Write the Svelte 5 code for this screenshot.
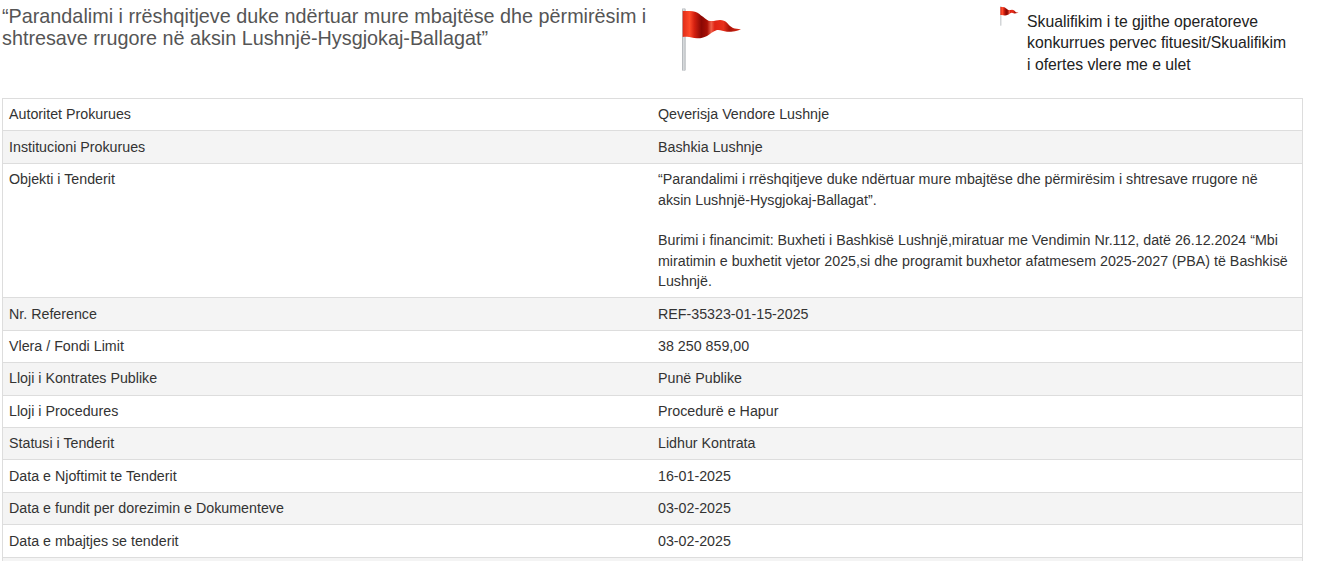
<script>
  const rows = [
    ['Autoritet Prokurues', 'Qeverisja Vendore Lushnje'],
    ['Institucioni Prokurues', 'Bashkia Lushnje'],
    ['Objekti i Tenderit', null],
    ['Nr. Reference', 'REF-35323-01-15-2025'],
    ['Vlera / Fondi Limit', '38 250 859,00'],
    ['Lloji i Kontrates Publike', 'Punë Publike'],
    ['Lloji i Procedures', 'Procedurë e Hapur'],
    ['Statusi i Tenderit', 'Lidhur Kontrata'],
    ['Data e Njoftimit te Tenderit', '16-01-2025'],
    ['Data e fundit per dorezimin e Dokumenteve', '03-02-2025'],
    ['Data e mbajtjes se tenderit', '03-02-2025'],
    ['', '']
  ];
</script>

{#snippet flag(cls, id)}
  <svg class={cls} viewBox="0 0 60 64">
    <defs>
      <linearGradient id={id} x1="0" x2="1" y1="0" y2="0">
        <stop offset="0" stop-color="#e02c18" />
        <stop offset="0.12" stop-color="#ff4a2a" />
        <stop offset="0.2" stop-color="#d42010" />
        <stop offset="0.32" stop-color="#8a0804" />
        <stop offset="0.42" stop-color="#a81006" />
        <stop offset="0.49" stop-color="#f0604a" />
        <stop offset="0.55" stop-color="#e02414" />
        <stop offset="0.7" stop-color="#e8301c" />
        <stop offset="0.8" stop-color="#a81006" />
        <stop offset="1" stop-color="#e03018" />
      </linearGradient>
      <linearGradient id="{id}-pole" x1="0" x2="1" y1="0" y2="0">
        <stop offset="0" stop-color="#a8acb0" />
        <stop offset="0.5" stop-color="#dfe2e4" />
        <stop offset="1" stop-color="#a8acb0" />
      </linearGradient>
    </defs>
    <rect x="0" y="0" width="3.6" height="63" rx="1.6" fill="url(#{id}-pole)" />
    <path d="M0.7 3 C6 3 10 3 13 3.7 C17 5 18 7 21 8.7 C24 11 26 13 28 13 C32 13.5 35 12 38 12 C41 12 43 13 45 14.7 C47 17 49 19 51 20 C53 20.8 56 21 59 21.3 C57 22 56 22.5 55 22.7 C51 23.8 48 24 45 23.7 C41 23 38 21.5 35 22 C31 23 28 26.5 25 28 C21 30 18 30.5 15 30.3 C11 30 8 29 5 28.7 C3 28.6 2 28.8 0.7 29 Z" fill="url(#{id})" />
  </svg>
{/snippet}

<div class="page">
  <header class="top">
    <h2 class="title">“Parandalimi i rrëshqitjeve duke ndërtuar mure mbajtëse dhe përmirësim i shtresave rrugore në aksin Lushnjë-Hysgjokaj-Ballagat”</h2>
    <div class="big-flag">{@render flag('flag-lg', 'grad-lg')}</div>
    <div class="note">
      {@render flag('flag-sm', 'grad-sm')}
      <p>Skualifikim i te gjithe operatoreve konkurrues pervec fituesit/Skualifikim i ofertes vlere me e ulet</p>
    </div>
  </header>

  <table>
    <tbody>
      {#each rows as row, i}
        <tr class:odd={i % 2 === 1}>
          <td>{row[0]}</td>
          <td>
            {#if row[1] === null}
              “Parandalimi i rrëshqitjeve duke ndërtuar mure mbajtëse dhe përmirësim i shtresave rrugore në aksin Lushnjë-Hysgjokaj-Ballagat”.<br /><br />
              Burimi i financimit: Buxheti i Bashkisë Lushnjë,miratuar me Vendimin Nr.112, datë 26.12.2024 “Mbi miratimin e buxhetit vjetor 2025,si dhe programit buxhetor afatmesem 2025-2027 (PBA) të Bashkisë Lushnjë.
            {:else}
              {row[1]}
            {/if}
          </td>
        </tr>
      {/each}
    </tbody>
  </table>
</div>

<style>
  :global(body) {
    margin: 0;
    background: #fff;
    overflow: hidden;
  }

  .page {
    height: 561px;
    overflow: hidden;
    font-family: "Liberation Sans", Arial, sans-serif;
    color: #333;
    font-size: 14.26px;
  }

  .top {
    display: flex;
    height: 98px;
    padding-left: 2px;
  }

  .title {
    flex: none;
    width: 650px;
    margin: 5px 0 0;
    font-size: 19.8px;
    font-weight: 400;
    line-height: 22px;
    color: #555;
  }

  .big-flag {
    flex: none;
    width: 348px;
    padding: 8px 0 0 30px;
    box-sizing: border-box;
  }

  .flag-lg {
    display: block;
    width: 60px;
    height: 64px;
  }

  .note {
    display: flex;
    align-items: flex-start;
    width: 300px;
    padding-top: 6px;
  }

  .flag-sm {
    flex: none;
    width: 19px;
    height: 20px;
    margin-right: 8px;
  }

  .note p {
    margin: 5px 0 0;
    width: 262px;
    font-size: 15.75px;
    line-height: 21.3px;
    color: #222;
  }

  table {
    width: 1301px;
    margin-left: 2px;
    border-collapse: collapse;
    table-layout: fixed;
  }

  td {
    width: 50%;
    height: 31.42px;
    box-sizing: border-box;
    padding: 5.3px 6px 5.72px;
    border: 1px solid #ddd;
    line-height: 20.4px;
    vertical-align: top;
    color: #333;
  }

  td:first-child {
    border-right: 0;
  }

  td:last-child {
    border-left: 0;
    padding-left: 5.5px;
    padding-right: 10px;
  }

  tr.odd td {
    background: #f4f4f4;
  }
</style>
